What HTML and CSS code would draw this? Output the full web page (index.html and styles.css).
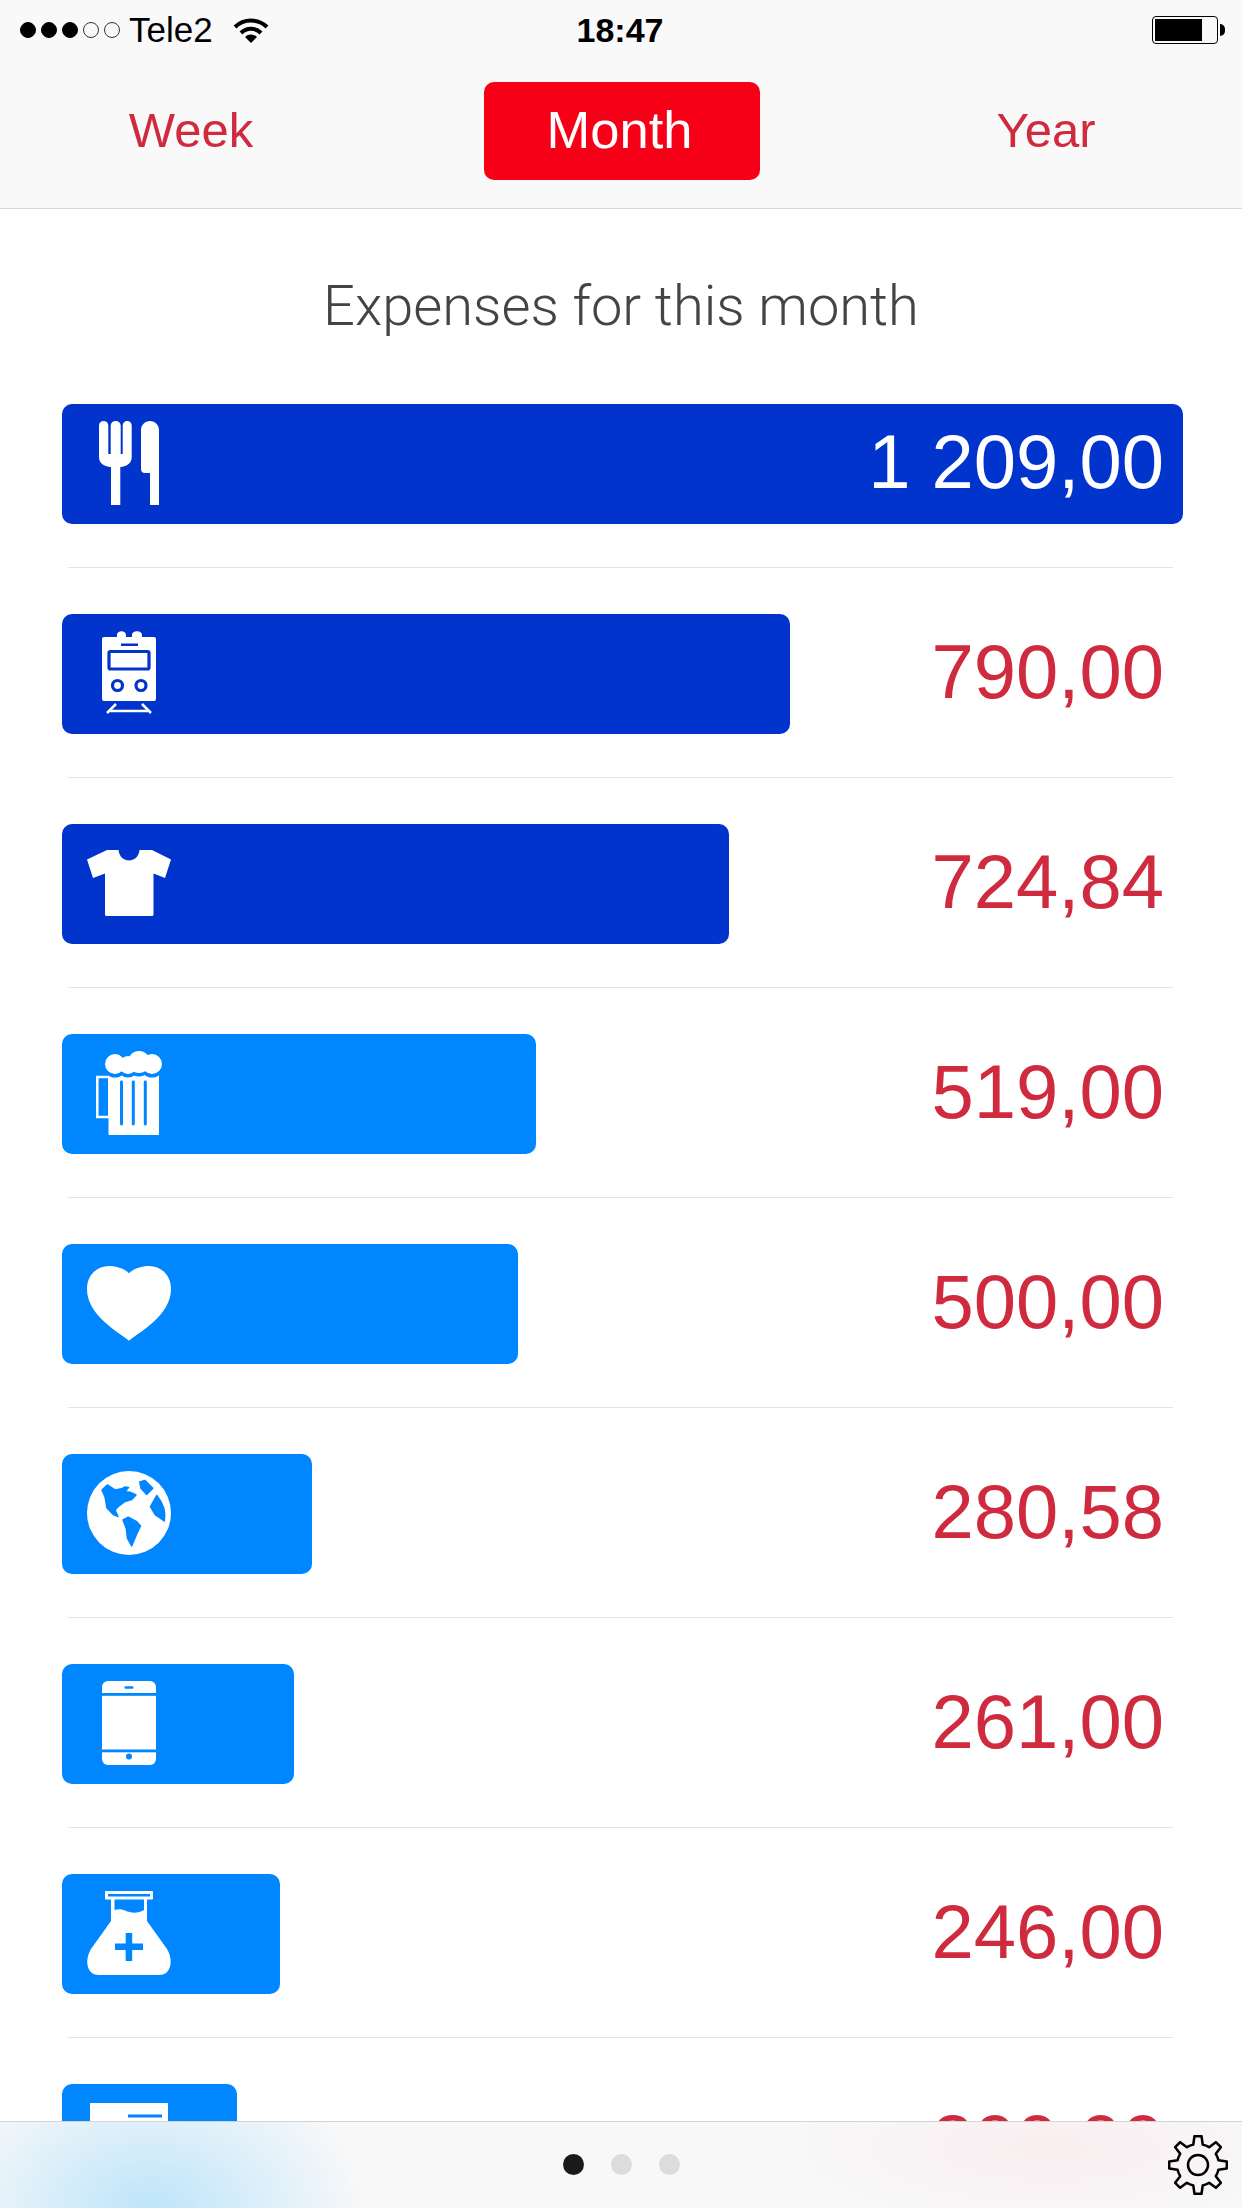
FILE: index.html
```html
<!DOCTYPE html>
<html lang="en">
<head>
  <meta charset="UTF-8" />
  <meta name="viewport" content="width=device-width, initial-scale=1.0"/>
  <title>Expenses</title>
  <link rel="stylesheet" href="styles.css">
</head>
<body>
  <div class="page">
    <header class="top">
      <div class="status">
        <div class="status-left">
          <span class="signal"><i class="on"></i><i class="on"></i><i class="on"></i><i></i><i></i></span>
          <span class="carrier">Tele2</span>
          <svg class="wifi" viewBox="0 0 36 26"><path class="wifi-arc" d="M2 10A23 23 0 0 1 34 10"/><path class="wifi-arc" d="M8 16A14 14 0 0 1 28 16"/><path d="M12 20A8.500 8.500 0 0 1 24 20L18 26Z"/></svg>
        </div>
        <span class="time">18:47</span>
        <div class="battery"><div class="battery-body"><div class="battery-fill"></div></div><div class="battery-nub"></div></div>
      </div>
      <nav class="tabs">
        <a class="tab">Week</a>
        <a class="tab active">Month</a>
        <a class="tab year">Year</a>
      </nav>
    </header>

    <main class="content">
      <h1 class="title">Expenses for this month</h1>

      <div class="row">
        <div class="bar dark" style="width:1121px">
          <svg class="icon" viewBox="0 0 84 84"><path d="M12 4.500a4.650 4.500 0 0 1 9.300 0V33H23.700V4.500a5 4.500 0 0 1 10 0V33H35.700V4.500a4.500 4.500 0 0 1 9 0V36c0 6-4.500 9.500-11.400 10V84H24V46c-7.500-.5-12-4-12-10Z"/><path d="M54 9c0-5 4-9 9-9s9 4 9 9V84H63V52H58c-2.500 0-4-1.500-4-4Z"/></svg>
        </div>
        <span class="amount on-bar">1 209,00</span>
      </div>
      <div class="divider"></div>

      <div class="row">
        <div class="bar dark" style="width:728px">
          <svg class="icon" viewBox="0 0 84 84"><path d="M15 8a2 2 0 0 1 2-2H30V4c0-5 9-5 9 0V6H45V4c0-5 10-5 10 0V6H67a2 2 0 0 1 2 2V68a2 2 0 0 1-2 2H17a2 2 0 0 1-2-2Z"/><rect class="cut" x="34" y="12.500" width="17" height="2.500"/><rect class="cut-line" x="22" y="20.500" width="40" height="17.500" rx="1.500"/><circle class="cut-line" cx="30.500" cy="54.500" r="5"/><circle class="cut-line" cx="54" cy="54.500" r="5"/><path class="rail" d="M29 73L20 82M55 73L64 82M23 80H61"/></svg>
        </div>
        <span class="amount">790,00</span>
      </div>
      <div class="divider"></div>

      <div class="row">
        <div class="bar dark" style="width:667px">
          <svg class="icon" viewBox="0 0 84 84"><path d="M0 18.500L20 9H31.500C33 23 51 23 52.500 9H65L84 18.500 78 37 66.500 32.500V73.500a1.500 1.500 0 0 1-1.500 1.500H19.500a1.500 1.500 0 0 1-1.500-1.500V32.500L6 37Z"/></svg>
        </div>
        <span class="amount">724,84</span>
      </div>
      <div class="divider"></div>

      <div class="row">
        <div class="bar light" style="width:474px">
          <svg class="icon" viewBox="0 0 84 84"><rect class="rail" x="10.300" y="26" width="12" height="40"/><path d="M21.500 20H72V83a1 1 0 0 1-1 1H22.500a1 1 0 0 1-1-1Z"/><rect class="cut" x="33" y="29.500" width="3" height="45" rx="1.400"/><rect class="cut" x="44.800" y="29.500" width="3" height="45" rx="1.400"/><rect class="cut" x="56.800" y="29.500" width="3" height="45" rx="1.400"/><g class="foam-edge"><circle cx="28" cy="15" r="10"/><circle cx="41" cy="16" r="9"/><circle cx="52" cy="13" r="11"/><circle cx="65" cy="15" r="10"/></g><g><circle cx="28" cy="13" r="10"/><circle cx="41" cy="14" r="9"/><circle cx="52" cy="11" r="11"/><circle cx="65" cy="13" r="10"/></g></svg>
        </div>
        <span class="amount">519,00</span>
      </div>
      <div class="divider"></div>

      <div class="row">
        <div class="bar light" style="width:456px">
          <svg class="icon" viewBox="0 0 84 84"><path d="M42 79.700C30 70 0 54 0 28 0 14 10 5 22 5 30 5 38 8 42 12.300 46 8 54 5 62 5 74 5 84 14 84 28 84 54 54 70 42 79.700Z"/></svg>
        </div>
        <span class="amount">500,00</span>
      </div>
      <div class="divider"></div>

      <div class="row">
        <div class="bar light" style="width:250px">
          <svg class="icon" viewBox="0 0 84 84"><circle cx="42" cy="42" r="42"/><path class="cut land" d="M15 19L20.300 14 28 19 34.700 17.800 38 16 41.500 16.500 38 20.700 43 21.300 49 24 44.700 28.500 38 30.500 31.300 35.500 28 39 31 45.500 26.300 43.500 20 37 18 25.700Z"/><path class="cut land" d="M36 49L41.300 46.200 49.700 50.700 53.500 55 50 62.300 44.700 75 40.500 67.300 39.300 57.300Z"/><path class="cut land" d="M52.800 11L58 9.500 65.800 17.300 59.700 23.500 54 17.300Z"/><path class="cut land" d="M69.700 24.500C76 32 79 41 77.300 50L68.500 44 63.500 35.700Z"/></svg>
        </div>
        <span class="amount">280,58</span>
      </div>
      <div class="divider"></div>

      <div class="row">
        <div class="bar light" style="width:232px">
          <svg class="icon" viewBox="0 0 84 84"><rect x="15" y="0" width="54" height="84" rx="6"/><rect class="cut" x="15" y="12" width="54" height="2.800"/><rect class="cut" x="15" y="68.500" width="54" height="2.800"/><rect class="cut" x="37.500" y="5.200" width="9" height="2.500" rx="1.200"/><circle class="cut" cx="42" cy="75.500" r="3"/></svg>
        </div>
        <span class="amount">261,00</span>
      </div>
      <div class="divider"></div>

      <div class="row">
        <div class="bar light" style="width:218px">
          <svg class="icon" viewBox="0 0 84 84"><rect x="18" y="0" width="48" height="8.500" rx="1"/><rect class="cut" x="21" y="3" width="42" height="2.500"/><path d="M24 8H60V30L80 58C87 70 84 84 72 84H12C0 84-3 70 4 58L24 30Z"/><path class="cut" d="M27.500 8.500H57V19C50 23 44 22 38 19.500 34 17.500 30 18 27.500 19Z"/><rect class="cut" x="28" y="52.500" width="28" height="6.500"/><rect class="cut" x="38.700" y="42" width="6.500" height="28"/></svg>
        </div>
        <span class="amount">246,00</span>
      </div>
      <div class="divider"></div>

      <div class="row">
        <div class="bar light" style="width:175px">
          <svg class="icon" viewBox="0 0 84 84"><rect x="3" y="2" width="78" height="82"/><rect class="cut" x="41" y="13.500" width="34" height="3"/></svg>
        </div>
        <span class="amount">200,00</span>
      </div>
    </main>

    <footer class="bottom">
      <span></span>
      <div class="pager"><i class="current"></i><i></i><i></i></div>
      <svg class="gear" viewBox="0 0 60 60">
        <defs><path id="tooth" d="M21.960 10.600L25.280 9.540 26.470 1.220H33.530L34.720 9.540 38.040 10.600"/></defs>
        <use href="#tooth"/>
        <use href="#tooth" transform="rotate(45 30 30)"/>
        <use href="#tooth" transform="rotate(90 30 30)"/>
        <use href="#tooth" transform="rotate(135 30 30)"/>
        <use href="#tooth" transform="rotate(180 30 30)"/>
        <use href="#tooth" transform="rotate(225 30 30)"/>
        <use href="#tooth" transform="rotate(270 30 30)"/>
        <use href="#tooth" transform="rotate(315 30 30)"/>
        <circle cx="30" cy="30" r="10"/>
      </svg>
    </footer>
  </div>
</body>
</html>
```

FILE: styles.css
```css
* {
  box-sizing: border-box;
}
body {
  margin: 0;
  font-family: "Liberation Sans", Arial, sans-serif;
  background-color: #ffffff;
}
.page {
  display: flex;
  flex-direction: column;
  height: 2208px;
  overflow: hidden;
}

/* top bar */
.top {
  flex: none;
  height: 209px;
  background-color: #f9f9f9;
  border-bottom: 1px solid #d8d8d8;
}
.status {
  display: grid;
  grid-template-columns: 1fr auto 1fr;
  align-items: center;
  height: 60px;
  padding: 0 17px 0 20px;
  color: #000;
}
.status-left {
  display: flex;
  align-items: center;
}
.signal {
  display: flex;
  gap: 5px;
  margin-right: 9px;
}
.signal i {
  width: 16px;
  height: 16px;
  border: 1px solid #333;
  border-radius: 50%;
}
.signal i.on {
  background-color: #000;
  border-color: #000;
}
.carrier {
  font-size: 35px;
}
.wifi {
  width: 36px;
  height: 26px;
  margin-left: 20px;
}
.wifi-arc {
  fill: none;
  stroke: #000;
  stroke-width: 4;
}
.time {
  margin-right: 5px;
  font-size: 34px;
  font-weight: bold;
}
.battery {
  display: flex;
  align-items: center;
  justify-self: end;
}
.battery-body {
  width: 66px;
  height: 28px;
  padding: 2px;
  border: 1.500px solid #000;
  border-radius: 4px;
}
.battery-fill {
  width: 47px;
  height: 100%;
  background-color: #000;
}
.battery-nub {
  width: 5px;
  height: 12px;
  margin-left: 2px;
  background-color: #000;
  border-radius: 0 6px 6px 0;
}
.tabs {
  display: flex;
  gap: 155px;
  padding: 22px 0 0 53px;
}
.tab {
  width: 276px;
  height: 98px;
  line-height: 96px;
  text-align: center;
  font-size: 49px;
  color: #cf2a3e;
  border-radius: 10px;
}
.tab.active {
  padding-right: 5px;
  font-size: 52.500px;
  background-color: #f60018;
  color: #ffffff;
}
.tab.year {
  padding-right: 14px;
}

/* list */
.content {
  flex: 1;
  min-height: 0;
  overflow: hidden;
}
.title {
  display: flex;
  align-items: center;
  justify-content: center;
  height: 195px;
  padding-bottom: 1px;
  margin: 0;
  font-family: Roboto, "Liberation Sans", sans-serif;
  font-size: 56px;
  font-weight: 300;
  color: #444444;
}
.row {
  display: grid;
  align-items: center;
  margin: 0 59px 43px 62px;
}
.row > * {
  grid-area: 1 / 1;
}
.bar {
  display: flex;
  align-items: center;
  height: 120px;
  padding-left: 25px;
  border-radius: 10px;
}
.dark {
  background-color: #0134cc;
  color: #0134cc;
}
.light {
  background-color: #0086ff;
  color: #0086ff;
}
.icon {
  flex: none;
  width: 84px;
  height: 84px;
  margin-bottom: 2px;
  fill: #ffffff;
  overflow: visible;
}
.icon .cut {
  fill: currentColor;
}
.icon .land {
  stroke: currentColor;
  stroke-width: 1.500;
  stroke-linejoin: round;
}
.icon .cut-line {
  fill: #ffffff;
  stroke: currentColor;
  stroke-width: 3.200;
}
.icon .rail {
  fill: none;
  stroke: #ffffff;
  stroke-width: 2.500;
}
.icon .foam-edge {
  fill: currentColor;
  stroke: currentColor;
  stroke-width: 3;
}
.amount {
  justify-self: end;
  margin-bottom: 5px;
  padding-right: 19px;
  font-size: 76px;
  color: #cf2a3e;
}
.amount.on-bar {
  color: #ffffff;
}
.divider {
  height: 1px;
  margin: 0 69px 46px 68px;
  background-color: #e4e4e4;
}

/* bottom bar */
.bottom {
  flex: none;
  display: grid;
  grid-template-columns: 1fr auto 1fr;
  align-items: center;
  height: 87px;
  padding: 0 14px 1px;
  border-top: 1px solid #d4d4d4;
  background-color: #f8f8f9;
  background-image:
    radial-gradient(ellipse 215px 150px at 150px 100%, #bde5fa, rgba(189,229,250,0)),
    radial-gradient(ellipse 260px 80px at 1050px 30%, #f9eef0, rgba(249,238,240,0));
}
.pager {
  display: flex;
  gap: 27px;
}
.pager i {
  width: 21px;
  height: 21px;
  background-color: #dcdcdc;
  border-radius: 50%;
}
.pager i.current {
  background-color: #1a1a1a;
}
.gear {
  justify-self: end;
  width: 60px;
  height: 60px;
  fill: none;
  stroke: #000;
  stroke-width: 2.500;
  stroke-linejoin: round;
}
```
